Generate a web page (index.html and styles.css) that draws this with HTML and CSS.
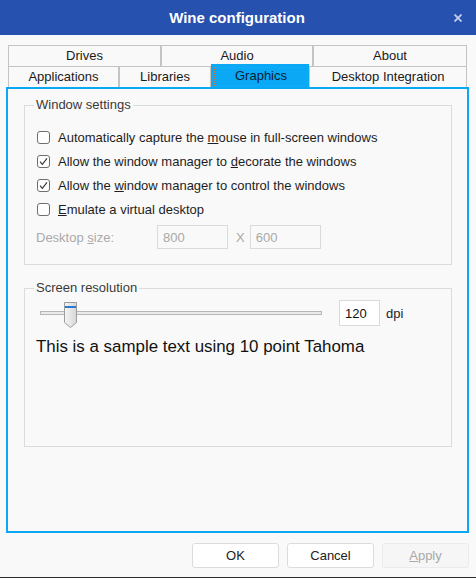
FILE: index.html
```html
<!DOCTYPE html>
<html lang="en">
<head>
<meta charset="utf-8">
<title>Wine configuration</title>
<link rel="stylesheet" href="styles.css">
</head>
<body>
<div class="window">
  <header class="titlebar">
    <span class="title">Wine configuration</span>
    <svg class="close" viewBox="0 0 8 8" width="8" height="8"><path d="M0.5 0.5 L7.5 7.5 M7.5 0.5 L0.5 7.5" stroke="#c3cfec" stroke-width="1.8" fill="none"/></svg>
  </header>

  <nav class="tabs">
    <div class="tab-row">
      <div class="tab t-drives">Drives</div>
      <div class="tab t-audio">Audio</div>
      <div class="tab t-about">About</div>
    </div>
    <div class="tab-row">
      <div class="tab t-apps">Applications</div>
      <div class="tab t-libs">Libraries</div>
      <div class="tab tab-active t-graphics"><span class="focus">Graphics</span></div>
      <div class="tab t-desk">Desktop Integration</div>
    </div>
  </nav>

  <main class="panel">
    <fieldset class="group group-window">
      <legend>Window settings</legend>
      <div class="check">
        <svg class="box" viewBox="0 0 13 13" width="13" height="13"><rect x="0.5" y="0.5" width="12" height="12" rx="2.5" fill="#fff" stroke="#6e6e6e"/></svg>
        <span>Automatically capture the <u>m</u>ouse in full-screen windows</span>
      </div>
      <div class="check">
        <svg class="box" viewBox="0 0 13 13" width="13" height="13"><rect x="0.5" y="0.5" width="12" height="12" rx="2.5" fill="#fff" stroke="#6e6e6e"/><path d="M3 6.6 L5.4 9.4 L10 3.4" stroke="#333" stroke-width="1.1" fill="none"/></svg>
        <span>Allow the window manager to <u>d</u>ecorate the windows</span>
      </div>
      <div class="check">
        <svg class="box" viewBox="0 0 13 13" width="13" height="13"><rect x="0.5" y="0.5" width="12" height="12" rx="2.5" fill="#fff" stroke="#6e6e6e"/><path d="M3 6.6 L5.4 9.4 L10 3.4" stroke="#333" stroke-width="1.1" fill="none"/></svg>
        <span>Allow the <u>w</u>indow manager to control the windows</span>
      </div>
      <div class="check">
        <svg class="box" viewBox="0 0 13 13" width="13" height="13"><rect x="0.5" y="0.5" width="12" height="12" rx="2.5" fill="#fff" stroke="#6e6e6e"/></svg>
        <span><u>E</u>mulate a virtual desktop</span>
      </div>
      <div class="desk-row">
        <span class="desk-label">Desktop <u>s</u>ize:</span>
        <span class="field field-disabled">800</span>
        <span class="times">X</span>
        <span class="field field-disabled">600</span>
      </div>
    </fieldset>

    <fieldset class="group group-res">
      <legend>Screen resolution</legend>
      <div class="res-row">
        <div class="slider">
          <div class="track"></div>
          <svg class="thumb" viewBox="0 0 13 26" width="13" height="26">
            <defs>
              <linearGradient id="tg" x1="0" x2="1" y1="0" y2="0">
                <stop offset="0" stop-color="#f6f6f6"/>
                <stop offset="1" stop-color="#d6d6d6"/>
              </linearGradient>
            </defs>
            <polygon points="0.5,0.5 12.5,0.5 12.5,20.5 6.5,25.5 0.5,20.5" fill="url(#tg)" stroke="#9c9c9c"/>
            <rect x="1" y="4" width="11" height="2" fill="#2a7bd8"/>
          </svg>
        </div>
        <span class="field field-dpi">120</span>
        <span class="dpi">dpi</span>
      </div>
      <p class="sample">This is a sample text using 10 point Tahoma</p>
    </fieldset>
  </main>

  <footer class="buttons">
    <button class="btn">OK</button>
    <button class="btn">Cancel</button>
    <button class="btn btn-disabled"><u>A</u>pply</button>
  </footer>
</div>
</body>
</html>
```

FILE: styles.css
```css
* {
  box-sizing: border-box;
}

html, body {
  margin: 0;
  padding: 0;
}

body {
  width: 476px;
  height: 578px;
  overflow: hidden;
  background: #f9f9f9;
  font-family: "Liberation Sans", Arial, sans-serif;
  font-size: 13px;
  color: #1e1e1e;
}

.window {
  height: 578px;
  display: flex;
  flex-direction: column;
  border-bottom: 1px solid #2a2a2a;
}

/* Title bar */
.titlebar {
  height: 35px;
  flex: none;
  background: #2651ae;
  display: grid;
  grid-template-columns: 1fr auto 1fr;
  align-items: center;
}

.title {
  grid-column: 2;
  color: #ffffff;
  font-weight: bold;
  font-size: 15px;
  line-height: 20px;
  margin-right: 2px;
}

.close {
  grid-column: 3;
  justify-self: end;
  margin-right: 14px;
  display: block;
}

/* Tabs */
.tabs {
  flex: none;
  margin: 10px 9px 0 8px;
}

.tab-row {
  display: flex;
  height: 21px;
}

.tab {
  flex: none;
  display: flex;
  align-items: center;
  justify-content: center;
  border: 1px solid #c4c4c4;
  border-bottom: none;
  color: #1a1a1a;
  line-height: 16px;
}

.t-drives { width: 153px; }
.t-audio { width: 152px; }
.t-about { width: 154px; }
.t-apps { width: 111px; }
.t-libs { width: 92px; }
.t-graphics { width: 98px; }
.t-desk { width: 158px; }

.tab-active {
  background: #0aa8f5;
  border: none;
  height: 23px;
  margin-top: -2px;
  padding: 3px 1px 1px 3px;
  align-items: stretch;
  justify-content: stretch;
}

.focus {
  flex: 1;
  display: flex;
  align-items: center;
  justify-content: center;
  border: 1px dotted #e0702a;
  color: #0d1d36;
  padding-bottom: 1px;
}

/* Panel */
.panel {
  flex: none;
  height: 446px;
  margin: 0 7px 0 6px;
  border: 2px solid #0aa8f5;
  padding: 8px 15px 0 16px;
}

.group {
  margin: 0;
  min-width: 0;
  border: 1px solid #dcdcdc;
  padding: 12px 12px 15px 12px;
}

.group legend {
  padding: 0 2px;
  margin-left: -3px;
  line-height: 16px;
  color: #3a3a3a;
}

.check {
  display: flex;
  align-items: center;
  gap: 8px;
  height: 24px;
  color: #1e1e1e;
}

.box {
  display: block;
  flex: none;
}

.desk-row {
  display: flex;
  align-items: center;
  height: 24px;
  margin-top: 4px;
  color: #a9a9a9;
}

.desk-label {
  width: 121px;
  margin-left: -1px;
}

.field {
  display: flex;
  align-items: center;
  height: 24px;
  width: 71px;
  padding-left: 5px;
  border: 1px solid #dadada;
}

.field-disabled {
  color: #a9a9a9;
  background: #f9f9f9;
}

.times {
  margin: 0 5px 0 8px;
}

.group-res {
  margin-top: 15px;
  padding: 3px 12px 89px 12px;
}

.res-row {
  display: flex;
  align-items: center;
  height: 28px;
}

.slider {
  position: relative;
  width: 282px;
  height: 28px;
  margin-left: 3px;
  flex: none;
}

.track {
  margin-top: 12px;
  height: 4px;
  border: 1px solid #b6b6b6;
  background: #ebebeb;
}

.thumb {
  position: absolute;
  left: 24px;
  top: 3px;
  display: block;
}

.field-dpi {
  width: 41px;
  height: 26px;
  margin-left: 17px;
  background: #ffffff;
  color: #111111;
}

.dpi {
  margin-left: 6px;
  color: #1e1e1e;
}

.sample {
  margin: 10px 0 0 -1px;
  font-size: 16.9px;
  line-height: 20px;
  color: #111111;
}

/* Buttons */
.buttons {
  flex: none;
  display: flex;
  justify-content: flex-end;
  gap: 8px;
  margin-top: 10px;
  padding-right: 7px;
}

.btn {
  width: 87px;
  height: 25px;
  margin: 0;
  padding: 0;
  background: #ffffff;
  border: 1px solid #dcdcdc;
  border-radius: 3px;
  font-family: "Liberation Sans", Arial, sans-serif;
  font-size: 13px;
  color: #222222;
}

.btn-disabled {
  background: #f6f6f6;
  border-color: #ebebeb;
  color: #a8a8a8;
}
```
